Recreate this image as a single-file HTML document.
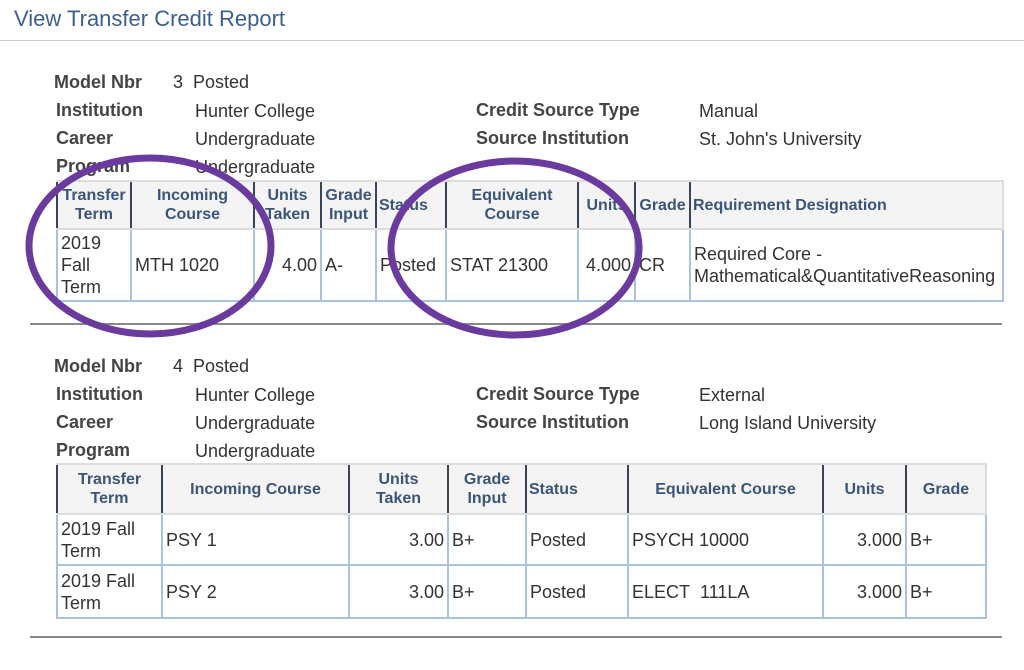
<!DOCTYPE html>
<html><head><meta charset="utf-8"><style>
body{margin:0;width:1024px;height:670px;background:#fff;position:relative;overflow:hidden;font-family:"Liberation Sans",Arial,sans-serif;color:#333}
.t{position:absolute;left:14px;top:6px;font-size:22px;color:#3b5f8f}
.hr{position:absolute;left:0;top:40px;width:1024px;height:1px;background:#ccc}
.sep{position:absolute;left:30px;width:972px;height:2px;background:#8a8a8a}
.l{position:absolute;font-weight:bold;font-size:18px;color:#444}
.v{position:absolute;font-size:18px;color:#333}
table{position:absolute;border-collapse:collapse;table-layout:fixed}
th{background:#f4f4f4;color:#3a5578;font-size:16px;font-weight:bold;text-align:center;border-top:2px solid #ddd;border-bottom:2px solid #ddd;border-left:2px solid #3a4658;padding:0 2px;line-height:19px}
th:last-child{border-right:2px solid #ddd}
td{border:2px solid #aac3dc;font-size:18px;padding:0 3px;line-height:22px;color:#333;vertical-align:middle}
.r{text-align:right}
</style></head><body>
<div class="t">View Transfer Credit Report</div>
<div class="hr"></div>

<div class="l" style="left:54px;top:72px">Model Nbr</div>
<div class="v" style="left:173px;top:72px">3&nbsp;&nbsp;Posted</div>
<div class="l" style="left:56px;top:100px">Institution</div>
<div class="v" style="left:195px;top:101px">Hunter College</div>
<div class="l" style="left:56px;top:128px">Career</div>
<div class="v" style="left:195px;top:129px">Undergraduate</div>
<div class="l" style="left:56px;top:156px">Program</div>
<div class="v" style="left:195px;top:157px">Undergraduate</div>
<div class="l" style="left:476px;top:100px">Credit Source Type</div>
<div class="v" style="left:699px;top:101px">Manual</div>
<div class="l" style="left:476px;top:128px">Source Institution</div>
<div class="v" style="left:699px;top:129px">St. John's University</div>

<table style="left:56px;top:180px;width:946px">
<colgroup><col style="width:74px"><col style="width:123px"><col style="width:67px"><col style="width:55px"><col style="width:70px"><col style="width:132px"><col style="width:57px"><col style="width:55px"><col style="width:313px"></colgroup>
<tr style="height:48px"><th>Transfer Term</th><th>Incoming Course</th><th>Units Taken</th><th>Grade Input</th><th style="text-align:left">Status</th><th>Equivalent Course</th><th>Units</th><th>Grade</th><th style="text-align:left">Requirement Designation</th></tr>
<tr style="height:72px"><td>2019 Fall Term</td><td>MTH 1020</td><td class="r">4.00</td><td>A-</td><td>Posted</td><td>STAT 21300</td><td class="r">4.000</td><td>CR</td><td>Required Core - Mathematical&amp;QuantitativeReasoning</td></tr>
</table>
<div class="sep" style="top:323px"></div>

<div class="l" style="left:54px;top:356px">Model Nbr</div>
<div class="v" style="left:173px;top:356px">4&nbsp;&nbsp;Posted</div>
<div class="l" style="left:56px;top:384px">Institution</div>
<div class="v" style="left:195px;top:385px">Hunter College</div>
<div class="l" style="left:56px;top:412px">Career</div>
<div class="v" style="left:195px;top:413px">Undergraduate</div>
<div class="l" style="left:56px;top:440px">Program</div>
<div class="v" style="left:195px;top:441px">Undergraduate</div>
<div class="l" style="left:476px;top:384px">Credit Source Type</div>
<div class="v" style="left:699px;top:385px">External</div>
<div class="l" style="left:476px;top:412px">Source Institution</div>
<div class="v" style="left:699px;top:413px">Long Island University</div>

<table style="left:56px;top:463px;width:929px">
<colgroup><col style="width:105px"><col style="width:187px"><col style="width:99px"><col style="width:78px"><col style="width:102px"><col style="width:195px"><col style="width:83px"><col style="width:80px"></colgroup>
<tr style="height:50px"><th>Transfer<br>Term</th><th>Incoming Course</th><th>Units<br>Taken</th><th>Grade<br>Input</th><th style="text-align:left">Status</th><th>Equivalent Course</th><th>Units</th><th>Grade</th></tr>
<tr style="height:51px"><td>2019 Fall Term</td><td>PSY 1</td><td class="r">3.00</td><td>B+</td><td>Posted</td><td>PSYCH 10000</td><td class="r">3.000</td><td>B+</td></tr>
<tr style="height:53px"><td>2019 Fall Term</td><td>PSY 2</td><td class="r">3.00</td><td>B+</td><td>Posted</td><td>ELECT&nbsp; 111LA</td><td class="r">3.000</td><td>B+</td></tr>
</table>
<div class="sep" style="top:636px"></div>

<svg style="position:absolute;left:0;top:0" width="1024" height="670">
<ellipse cx="150" cy="246" rx="121" ry="88" fill="none" stroke="#6a3a9e" stroke-width="7"/>
<ellipse cx="515" cy="248" rx="124" ry="87" fill="none" stroke="#6a3a9e" stroke-width="7"/>
</svg>
</body></html>
